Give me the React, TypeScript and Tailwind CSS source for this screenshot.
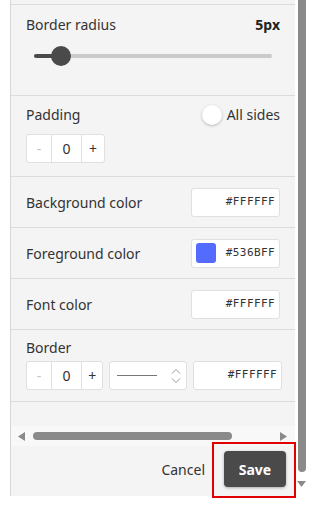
const font = "font-['Noto_Sans','Open_Sans',sans-serif]"

function Stepper() {
  return (
    <div className="flex h-[29px] w-[79px] rounded-[3px] border border-[#e0e0e0] bg-white text-[14px] text-[#333]">
      <span className="flex w-[25px] items-center justify-center border-r border-[#e0e0e0] text-[#c4c4c4]">-</span>
      <span className="flex w-[30px] items-center justify-center border-r border-[#e0e0e0]">0</span>
      <span className="flex flex-1 items-center justify-center">+</span>
    </div>
  )
}

function ColorInput({ value, swatch }: { value: string; swatch?: string }) {
  return (
    <div className="flex h-[29px] w-[89px] items-center rounded-[3px] border border-[#e0e0e0] bg-white pl-[4px] pr-[4px]">
      {swatch && <span className="h-[20px] w-[20px] rounded-[3px]" style={{ background: swatch }} />}
      <span className="ml-auto font-['DejaVu_Sans_Mono',monospace] text-[11px] tracking-[0.4px] text-[#333]">{value}</span>
    </div>
  )
}

function ColorRow({ label, value, swatch }: { label: string; value: string; swatch?: string }) {
  return (
    <div className="flex h-[51px] shrink-0 items-center justify-between border-b border-[#dcdcdc] pl-[15px] pr-[15px]">
      <span className="text-[14px] text-[#333]">{label}</span>
      <ColorInput value={value} swatch={swatch} />
    </div>
  )
}

export default function App() {
  return (
    <div className={`relative h-[506px] w-[323px] overflow-hidden bg-white ${font}`}>
      <div className="flex h-[496px]">
        <div className="w-[10px]" />
        <div className="flex w-[285px] flex-col border-l border-[#d6d6d6] bg-[#f4f4f4]">
          <div className="h-[5px] shrink-0 border-b border-[#dcdcdc]" />

          <div className="flex h-[91px] shrink-0 flex-col border-b border-[#dcdcdc] pl-[15px] pr-[15px] pt-[9px]">
            <div className="flex items-center justify-between">
              <span className="text-[14px] text-[#333]">Border radius</span>
              <span className="text-[14px] font-bold text-[#222]">5px</span>
            </div>
            <div className="relative mt-[19px] ml-[8px] mr-[8px] h-[4px] rounded-full bg-[#cacaca]">
              <div className="h-[4px] w-[26px] rounded-full bg-[#4a4a4a]" />
              <div className="absolute left-[17px] top-[-8px] h-[20px] w-[20px] rounded-full bg-[#4a4a4a]" />
            </div>
          </div>

          <div className="flex h-[81px] shrink-0 flex-col border-b border-[#dcdcdc] pl-[15px] pr-[15px] pt-[8px]">
            <div className="flex items-center justify-between">
              <span className="text-[14px] text-[#333]">Padding</span>
              <div className="flex items-center gap-[5px]">
                <span className="h-[20px] w-[20px] rounded-full bg-white shadow-[0_1px_3px_rgba(0,0,0,0.25)]" />
                <span className="text-[14px] text-[#333]">All sides</span>
              </div>
            </div>
            <div className="mt-[9px]">
              <Stepper />
            </div>
          </div>

          <ColorRow label="Background color" value="#FFFFFF" />
          <ColorRow label="Foreground color" value="#536BFF" swatch="#536bff" />
          <ColorRow label="Font color" value="#FFFFFF" />

          <div className="flex h-[72px] shrink-0 flex-col border-b border-[#dcdcdc] pl-[15px] pr-[13px] pt-[8px]">
            <span className="text-[14px] leading-[20px] text-[#333]">Border</span>
            <div className="mt-[3px] flex gap-[6px]">
              <Stepper />
              <div className="flex h-[29px] w-[79px] items-center rounded-[3px] border border-[#e0e0e0] bg-white pl-[7px] pr-[4px]">
                <span className="h-[1px] w-[40px] bg-[#777]" />
                <svg className="ml-auto" width="12" height="18" viewBox="0 0 12 18" fill="none" stroke="#999" strokeWidth="1">
                  <path d="M2 6.5 L6 2.5 L10 6.5" />
                  <path d="M2 11.5 L6 15.5 L10 11.5" />
                </svg>
              </div>
              <div className="flex-1">
                <ColorInput value="#FFFFFF" />
              </div>
            </div>
          </div>

          <div className="h-[24px] shrink-0" />

          <div className="flex h-[20px] shrink-0 items-center gap-[7px] bg-[#f8f8f8] pl-[7px] pr-[8px]">
            <svg width="8" height="9" viewBox="0 0 8 9"><path d="M7 0 L0 4.5 L7 9 Z" fill="#8a8a8a" /></svg>
            <div className="h-[8px] w-[199px] rounded-full bg-[#8a8a8a]" />
            <div className="flex-1" />
            <svg width="8" height="9" viewBox="0 0 8 9"><path d="M1 0 L8 4.5 L1 9 Z" fill="#8a8a8a" /></svg>
          </div>

          <div className="flex h-[49px] shrink-0 items-start justify-end">
            <span className="mr-[7px] mt-[13px] text-[14px] text-[#333]">Cancel</span>
            <div className="relative mr-[-1px] mt-[-4px] shrink-0 border-2 border-[#e00000] pb-[9px] pl-[10px] pr-[8px] pt-[7px]">
              <button className="h-[36px] w-[62px] rounded-[4px] bg-[#4a4a4a] text-[14px] font-bold text-white shadow-[0_1px_3px_rgba(0,0,0,0.3)]">
                Save
              </button>
            </div>
          </div>
        </div>
        <div className="w-[2px]" />
        <div className="flex w-[9px] flex-col items-center">
          <div className="h-[472px] w-[8px] rounded-b-full bg-[#8a8a8a]" />
          <svg className="mt-[9px]" width="9" height="6" viewBox="0 0 9 6"><path d="M0 0 L9 0 L4.5 6 Z" fill="#8a8a8a" /></svg>
        </div>
      </div>
    </div>
  )
}
